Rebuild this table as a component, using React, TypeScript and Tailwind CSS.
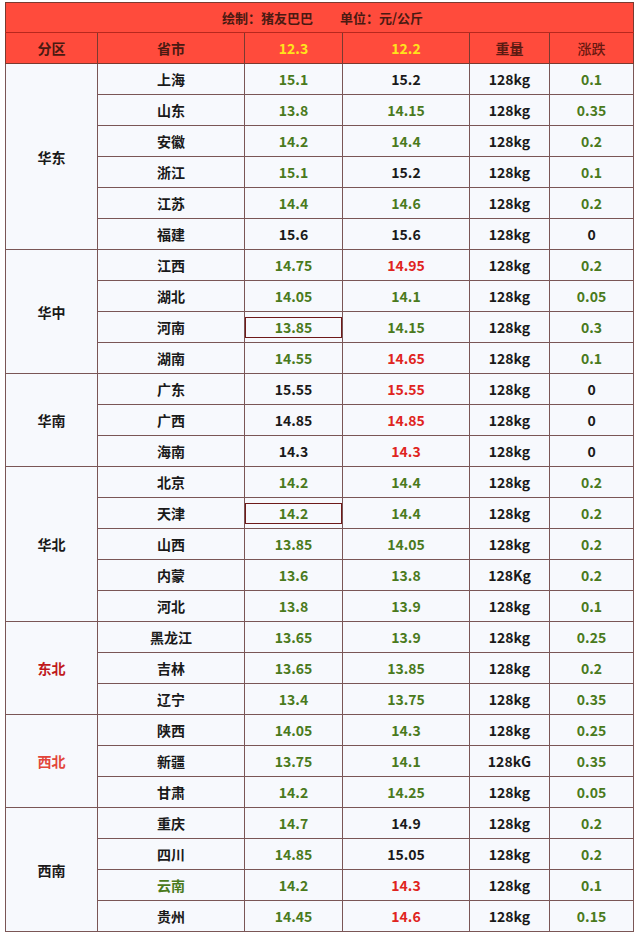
type Tone = "g" | "r" | "k";

type Row = {
  city: string;
  cityTone?: Tone;
  a: string;
  aTone: Tone;
  aBox?: boolean;
  b: string;
  bTone: Tone;
  w?: string;
  d: string;
  dTone: Tone;
};

type Group = { name: string; nameClass: string; rows: Row[] };

const groups: Group[] = [
  {
    name: "华东",
    nameClass: "text-[#1a1a1a]",
    rows: [
      { city: "上海", a: "15.1", aTone: "g", b: "15.2", bTone: "k", d: "0.1", dTone: "g" },
      { city: "山东", a: "13.8", aTone: "g", b: "14.15", bTone: "g", d: "0.35", dTone: "g" },
      { city: "安徽", a: "14.2", aTone: "g", b: "14.4", bTone: "g", d: "0.2", dTone: "g" },
      { city: "浙江", a: "15.1", aTone: "g", b: "15.2", bTone: "k", d: "0.1", dTone: "g" },
      { city: "江苏", a: "14.4", aTone: "g", b: "14.6", bTone: "g", d: "0.2", dTone: "g" },
      { city: "福建", a: "15.6", aTone: "k", b: "15.6", bTone: "k", d: "0", dTone: "k" },
    ],
  },
  {
    name: "华中",
    nameClass: "text-[#1a1a1a]",
    rows: [
      { city: "江西", a: "14.75", aTone: "g", b: "14.95", bTone: "r", d: "0.2", dTone: "g" },
      { city: "湖北", a: "14.05", aTone: "g", b: "14.1", bTone: "g", d: "0.05", dTone: "g" },
      { city: "河南", a: "13.85", aTone: "g", aBox: true, b: "14.15", bTone: "g", d: "0.3", dTone: "g" },
      { city: "湖南", a: "14.55", aTone: "g", b: "14.65", bTone: "r", d: "0.1", dTone: "g" },
    ],
  },
  {
    name: "华南",
    nameClass: "text-[#1a1a1a]",
    rows: [
      { city: "广东", a: "15.55", aTone: "k", b: "15.55", bTone: "r", d: "0", dTone: "k" },
      { city: "广西", a: "14.85", aTone: "k", b: "14.85", bTone: "r", d: "0", dTone: "k" },
      { city: "海南", a: "14.3", aTone: "k", b: "14.3", bTone: "r", d: "0", dTone: "k" },
    ],
  },
  {
    name: "华北",
    nameClass: "text-[#1a1a1a]",
    rows: [
      { city: "北京", a: "14.2", aTone: "g", b: "14.4", bTone: "g", d: "0.2", dTone: "g" },
      { city: "天津", a: "14.2", aTone: "g", aBox: true, b: "14.4", bTone: "g", d: "0.2", dTone: "g" },
      { city: "山西", a: "13.85", aTone: "g", b: "14.05", bTone: "g", d: "0.2", dTone: "g" },
      { city: "内蒙", a: "13.6", aTone: "g", b: "13.8", bTone: "g", w: "128Kg", d: "0.2", dTone: "g" },
      { city: "河北", a: "13.8", aTone: "g", b: "13.9", bTone: "g", d: "0.1", dTone: "g" },
    ],
  },
  {
    name: "东北",
    nameClass: "text-[#c0191c]",
    rows: [
      { city: "黑龙江", a: "13.65", aTone: "g", b: "13.9", bTone: "g", d: "0.25", dTone: "g" },
      { city: "吉林", a: "13.65", aTone: "g", b: "13.85", bTone: "g", d: "0.2", dTone: "g" },
      { city: "辽宁", a: "13.4", aTone: "g", b: "13.75", bTone: "g", d: "0.35", dTone: "g" },
    ],
  },
  {
    name: "西北",
    nameClass: "text-[#e2463a]",
    rows: [
      { city: "陕西", a: "14.05", aTone: "g", b: "14.3", bTone: "g", d: "0.25", dTone: "g" },
      { city: "新疆", a: "13.75", aTone: "g", b: "14.1", bTone: "g", w: "128kG", d: "0.35", dTone: "g" },
      { city: "甘肃", a: "14.2", aTone: "g", b: "14.25", bTone: "g", d: "0.05", dTone: "g" },
    ],
  },
  {
    name: "西南",
    nameClass: "text-[#1a1a1a]",
    rows: [
      { city: "重庆", a: "14.7", aTone: "g", b: "14.9", bTone: "k", d: "0.2", dTone: "g" },
      { city: "四川", a: "14.85", aTone: "g", b: "15.05", bTone: "k", d: "0.2", dTone: "g" },
      { city: "云南", cityTone: "g", a: "14.2", aTone: "g", b: "14.3", bTone: "r", d: "0.1", dTone: "g" },
      { city: "贵州", a: "14.45", aTone: "g", b: "14.6", bTone: "r", d: "0.15", dTone: "g" },
    ],
  },
];

const tone: Record<Tone, string> = {
  g: "text-[#4a7a1c]",
  r: "text-[#e02420]",
  k: "text-[#1a1a1a]",
};

const cell = "border border-[#7a5656] bg-[#f7f9fd] text-center align-middle p-0";
const head = "border border-[#7a3a30] bg-[#ff4b3c] text-center align-middle p-0";

export default function App() {
  return (
    <div
      className="min-h-[938px] w-[640px] bg-white pt-[2px] pl-[5px]"
      style={{ fontFamily: '"Noto Sans CJK SC", "Noto Sans", sans-serif' }}
    >
      <table className="w-[628px] table-fixed border-collapse text-[14px] font-bold leading-none">
        <colgroup>
          <col className="w-[92px]" />
          <col className="w-[147px]" />
          <col className="w-[98px]" />
          <col className="w-[127px]" />
          <col className="w-[80px]" />
          <col className="w-[84px]" />
        </colgroup>
        <thead>
          <tr className="h-[30px]">
            <th colSpan={6} className={`${head} border-b-[#b8281e] text-[13px] text-[#4a1a12]`}>
              <span className="ml-[6px]">绘制：猪友巴巴</span>
              <span className="ml-[27px]">单位：元/公斤</span>
            </th>
          </tr>
          <tr className="h-[31px]">
            <th className={`${head} text-[#4a1a12]`}>分区</th>
            <th className={`${head} text-[#4a1a12]`}>省市</th>
            <th className={`${head} text-[#ffe31c]`}>12.3</th>
            <th className={`${head} text-[#ffe31c]`}>12.2</th>
            <th className={`${head} font-semibold text-[#5a1a12]`}>重量</th>
            <th className={`${head} font-medium text-[#6a1810]`}>涨跌</th>
          </tr>
        </thead>
        <tbody>
          {groups.map((g) =>
            g.rows.map((r, i) => (
              <tr key={r.city} className="h-[31px]">
                {i === 0 && (
                  <td rowSpan={g.rows.length} className={`${cell} ${g.nameClass}`}>
                    {g.name}
                  </td>
                )}
                <td className={`${cell} ${tone[r.cityTone ?? "k"]}`}>{r.city}</td>
                <td className={`${cell} ${tone[r.aTone]}`}>
                  {r.aBox ? (
                    <div className="mx-auto flex h-[21px] w-[97px] items-center justify-center border border-[#6e1a1a]">
                      {r.a}
                    </div>
                  ) : (
                    r.a
                  )}
                </td>
                <td className={`${cell} ${tone[r.bTone]}`}>{r.b}</td>
                <td className={`${cell} text-[#1a1a1a]`}>{r.w ?? "128kg"}</td>
                <td className={`${cell} ${tone[r.dTone]}`}>{r.d}</td>
              </tr>
            ))
          )}
        </tbody>
      </table>
    </div>
  );
}
